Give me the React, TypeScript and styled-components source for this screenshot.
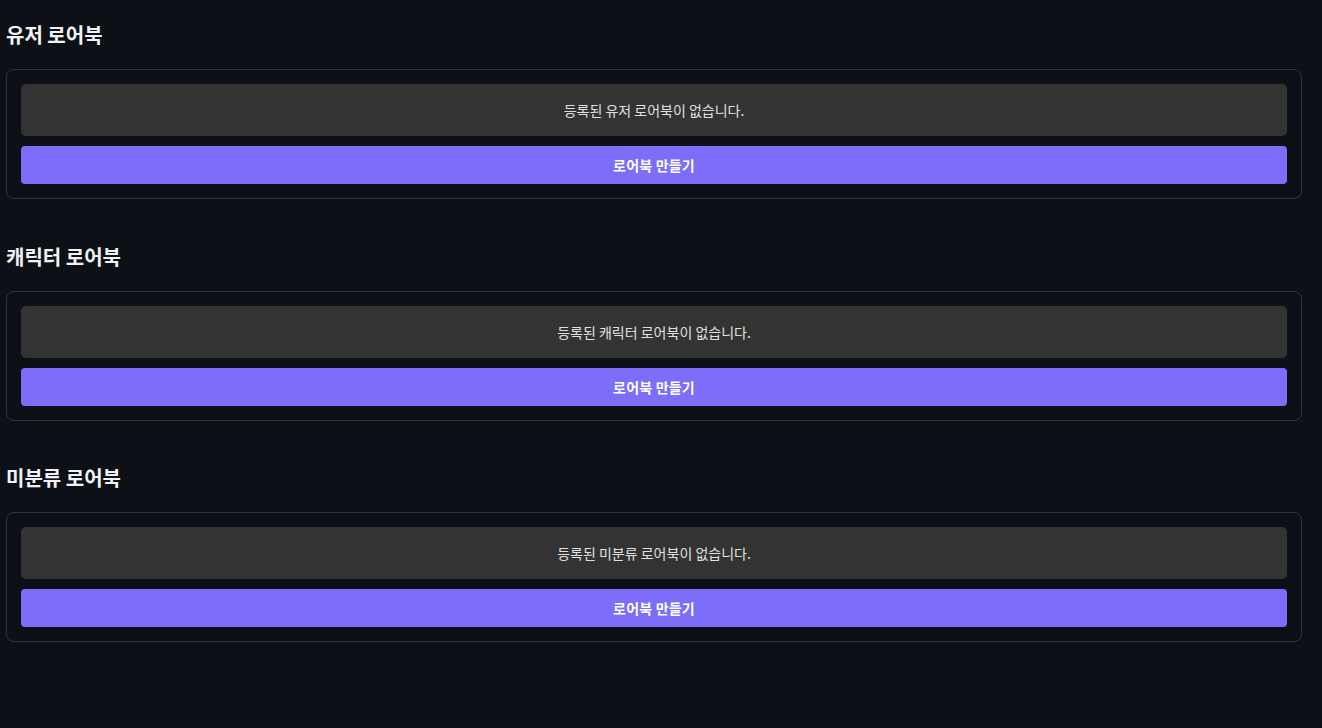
import React from 'react';
import styled, { createGlobalStyle } from 'styled-components';

const GlobalStyle = createGlobalStyle`
  html, body {
    margin: 0;
    padding: 0;
    background: #0d1117;
  }
  body {
    font-family: 'Noto Sans CJK KR', 'Noto Sans', sans-serif;
    color: #e6edf3;
  }
`;

const Page = styled.div`
  display: flex;
  flex-direction: column;
  gap: 23.5px;
  padding: 1px 20px 40px 6px;
  min-height: 728px;
  box-sizing: border-box;
  background: #0d1117;
`;

const Section = styled.section`
  display: flex;
  flex-direction: column;
`;

const Title = styled.h2`
  margin: 20px 0;
  font-size: 20px;
  line-height: 28px;
  font-weight: 700;
  color: #f0f3f6;
`;

const Card = styled.div`
  display: flex;
  flex-direction: column;
  gap: 10px;
  padding: 14px;
  border: 1px solid #30363d;
  border-radius: 8px;
`;

const Empty = styled.div`
  display: flex;
  align-items: center;
  justify-content: center;
  height: 52px;
  border-radius: 5px;
  background: #333333;
  color: #e0e0e0;
  font-size: 14px;
`;

const MakeButton = styled.button`
  height: 38px;
  border: none;
  border-radius: 4px;
  background: #7c6dfa;
  color: #ffffff;
  font-family: inherit;
  font-size: 14px;
  font-weight: 700;
  letter-spacing: 0.2px;
  cursor: pointer;
`;

const sections = [
  { title: '유저 로어북', empty: '등록된 유저 로어북이 없습니다.' },
  { title: '캐릭터 로어북', empty: '등록된 캐릭터 로어북이 없습니다.' },
  { title: '미분류 로어북', empty: '등록된 미분류 로어북이 없습니다.' },
];

const App = () => {
  return (
    <>
      <GlobalStyle />
      <Page>
        {sections.map(s => (
          <Section key={s.title}>
            <Title>{s.title}</Title>
            <Card>
              <Empty>{s.empty}</Empty>
              <MakeButton>로어북 만들기</MakeButton>
            </Card>
          </Section>
        ))}
      </Page>
    </>
  );
};

export default App;
